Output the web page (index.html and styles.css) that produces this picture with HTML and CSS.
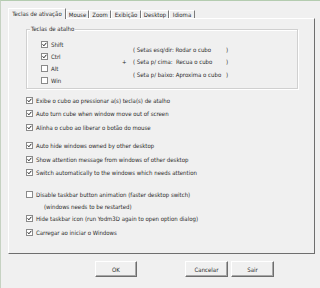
FILE: index.html
```html
<!DOCTYPE html>
<html lang="pt">
<head>
  <meta charset="UTF-8">
  <title>Opções</title>
  <link rel="stylesheet" href="styles.css">
</head>
<body>
  <div class="window">
    <!-- Abas -->
    <div class="tabs">
      <div class="tab active">Teclas de ativação</div>
      <div class="tab t-mouse">Mouse</div>
      <div class="tab t-zoom">Zoom</div>
      <div class="tab t-exib">Exibição</div>
      <div class="tab t-desk">Desktop</div>
      <div class="tab t-idioma">Idioma</div>
    </div>

    <div class="panel">
      <!-- Teclas de atalho -->
      <div class="group">
        <span class="legend">Teclas de atalho</span>
        <div class="keys-left">
          <div class="check"><span class="box"><svg viewBox="0 0 5 5" width="5" height="5"><path d="M0.6 2.3 L1.9 3.8 L4.4 0.8" fill="none" stroke="#222" stroke-width="1"/></svg></span>Shift</div>
          <div class="check"><span class="box"><svg viewBox="0 0 5 5" width="5" height="5"><path d="M0.6 2.3 L1.9 3.8 L4.4 0.8" fill="none" stroke="#222" stroke-width="1"/></svg></span>Ctrl</div>
          <div class="check"><span class="box"></span>Alt</div>
          <div class="check"><span class="box"></span>Win</div>
        </div>
        <div class="keys-right">
          <span></span><span class="hint">( Setas esq/dir: Rodar o cubo</span><span>)</span>
          <span>+</span><span class="hint">( Seta p/ cima:  Recua o cubo</span><span>)</span>
          <span></span><span class="hint">( Seta p/ baixo: Aproxima o cubo</span><span>)</span>
        </div>
      </div>

      <div class="opts sec1">
        <div class="check"><span class="box"><svg viewBox="0 0 5 5" width="5" height="5"><path d="M0.6 2.3 L1.9 3.8 L4.4 0.8" fill="none" stroke="#222" stroke-width="1"/></svg></span>Exibe o cubo ao pressionar a(s) tecla(s) de atalho</div>
        <div class="check"><span class="box"><svg viewBox="0 0 5 5" width="5" height="5"><path d="M0.6 2.3 L1.9 3.8 L4.4 0.8" fill="none" stroke="#222" stroke-width="1"/></svg></span>Auto turn cube when window move out of screen</div>
        <div class="check"><span class="box"><svg viewBox="0 0 5 5" width="5" height="5"><path d="M0.6 2.3 L1.9 3.8 L4.4 0.8" fill="none" stroke="#222" stroke-width="1"/></svg></span>Alinha o cubo ao liberar o botão do mouse</div>
      </div>

      <div class="opts sec2">
        <div class="check"><span class="box"><svg viewBox="0 0 5 5" width="5" height="5"><path d="M0.6 2.3 L1.9 3.8 L4.4 0.8" fill="none" stroke="#222" stroke-width="1"/></svg></span>Auto hide windows owned by other desktop</div>
        <div class="check"><span class="box"><svg viewBox="0 0 5 5" width="5" height="5"><path d="M0.6 2.3 L1.9 3.8 L4.4 0.8" fill="none" stroke="#222" stroke-width="1"/></svg></span>Show attention message from windows of other desktop</div>
        <div class="check"><span class="box"><svg viewBox="0 0 5 5" width="5" height="5"><path d="M0.6 2.3 L1.9 3.8 L4.4 0.8" fill="none" stroke="#222" stroke-width="1"/></svg></span>Switch automatically to the windows which needs attention</div>
      </div>

      <div class="opts sec3">
        <div class="check"><span class="box"></span>Disable taskbar button animation (faster desktop switch)</div>
        <div class="sub">(windows needs to be restarted)</div>
        <div class="check"><span class="box"><svg viewBox="0 0 5 5" width="5" height="5"><path d="M0.6 2.3 L1.9 3.8 L4.4 0.8" fill="none" stroke="#222" stroke-width="1"/></svg></span>Hide taskbar icon (run Yodm3D again to open option dialog)</div>
        <div class="check last"><span class="box"><svg viewBox="0 0 5 5" width="5" height="5"><path d="M0.6 2.3 L1.9 3.8 L4.4 0.8" fill="none" stroke="#222" stroke-width="1"/></svg></span>Carregar ao iniciar o Windows</div>
      </div>
    </div>

    <!-- Botões -->
    <div class="buttons">
      <button class="btn">OK</button>
      <button class="btn btn-cancel">Cancelar</button>
      <button class="btn">Sair</button>
    </div>
  </div>
</body>
</html>
```

FILE: styles.css
```css
body {
  margin: 0;
  padding: 0;
  background-color: #f0f0f0;
  font-family: "DejaVu Sans Condensed", "Liberation Sans", sans-serif;
  font-size: 6px;
  color: #2a2a2a;
}
.window {
  width: 320px;
  height: 288px;
  box-sizing: border-box;
  background-color: #f0f0f0;
  border-top: 1px solid #b4ccb0;
  border-left: 1px solid #c6d2c2;
}

/* Abas */
.tabs {
  display: flex;
  align-items: flex-end;
  height: 10px;
  padding-top: 7px;
  margin-left: 7px;
}
.tab {
  box-sizing: border-box;
  height: 8px;
  line-height: 7px;
  text-align: center;
  white-space: nowrap;
  background-color: #f0f0f0;
  border-top: 1px solid #ffffff;
  border-left: 1px solid #ffffff;
  border-right: 1px solid #7a7a7a;
}
.tab.active {
  position: relative;
  z-index: 1;
  width: 58px;
  height: 11px;
  line-height: 9px;
  margin-bottom: -1px;
}
.t-mouse { width: 23px; }
.t-zoom { width: 22px; }
.t-exib { width: 30px; }
.t-desk { width: 28px; }
.t-idioma { width: 26px; }

/* Painel */
.panel {
  box-sizing: border-box;
  width: 307px;
  height: 236px;
  margin-left: 7px;
  border-top: 1px solid #ffffff;
  border-left: 1px solid #ffffff;
  border-right: 1px solid #6e6e6e;
  border-bottom: 1px solid #6e6e6e;
}

/* Grupo teclas de atalho */
.group {
  position: relative;
  display: flex;
  box-sizing: border-box;
  width: 272px;
  height: 60px;
  margin: 10px 0 0 17px;
  padding: 8px 0 0 14px;
  border: 1px solid #d0d0d0;
  box-shadow: inset 1px 1px 0 #ffffff, 1px 1px 0 #ffffff;
}
.legend {
  position: absolute;
  top: -5px;
  left: 3px;
  padding: 0 1px;
  line-height: 8px;
  background-color: #f0f0f0;
}
.keys-left {
  width: 81px;
}
.keys-left .check {
  height: 12px;
}
.keys-right {
  display: grid;
  grid-template-columns: 11px 93px auto;
  grid-auto-rows: 12.5px;
  align-items: center;
  margin-top: 5px;
  align-self: flex-start;
}
.hint {
  white-space: pre;
}

/* Checkboxes */
.check {
  display: flex;
  align-items: center;
  height: 13.3px;
  white-space: nowrap;
}
.box {
  display: flex;
  align-items: center;
  justify-content: center;
  box-sizing: border-box;
  width: 7px;
  height: 7px;
  margin-right: 3px;
  background-color: #ffffff;
  border: 1px solid #8a8a8a;
  flex-shrink: 0;
}
.opts {
  margin-left: 17px;
}
.sec1 { margin-top: 5px; }
.sec2 { margin-top: 5.3px; }
.sec3 { margin-top: 8.5px; }
.sec3 .check { height: 13px; }
.sec3 .check.last { margin-top: 1px; }
.sub {
  height: 11px;
  line-height: 11px;
  margin-left: 18px;
}

/* Botões */
.buttons {
  display: flex;
  gap: 3px;
  margin-top: 7px;
  padding-left: 94px;
}
.btn {
  box-sizing: border-box;
  width: 43px;
  height: 16px;
  padding: 0;
  font-family: inherit;
  font-size: 6px;
  color: #2a2a2a;
  background-color: #f0f0f0;
  border-top: 1px solid #ffffff;
  border-left: 1px solid #ffffff;
  border-right: 1px solid #6e6e6e;
  border-bottom: 1px solid #6e6e6e;
  box-shadow: inset -1px -1px 0 #a8a8a8;
}
.btn:first-child {
  width: 42px;
}
.btn-cancel {
  margin-left: 45px;
}
```
